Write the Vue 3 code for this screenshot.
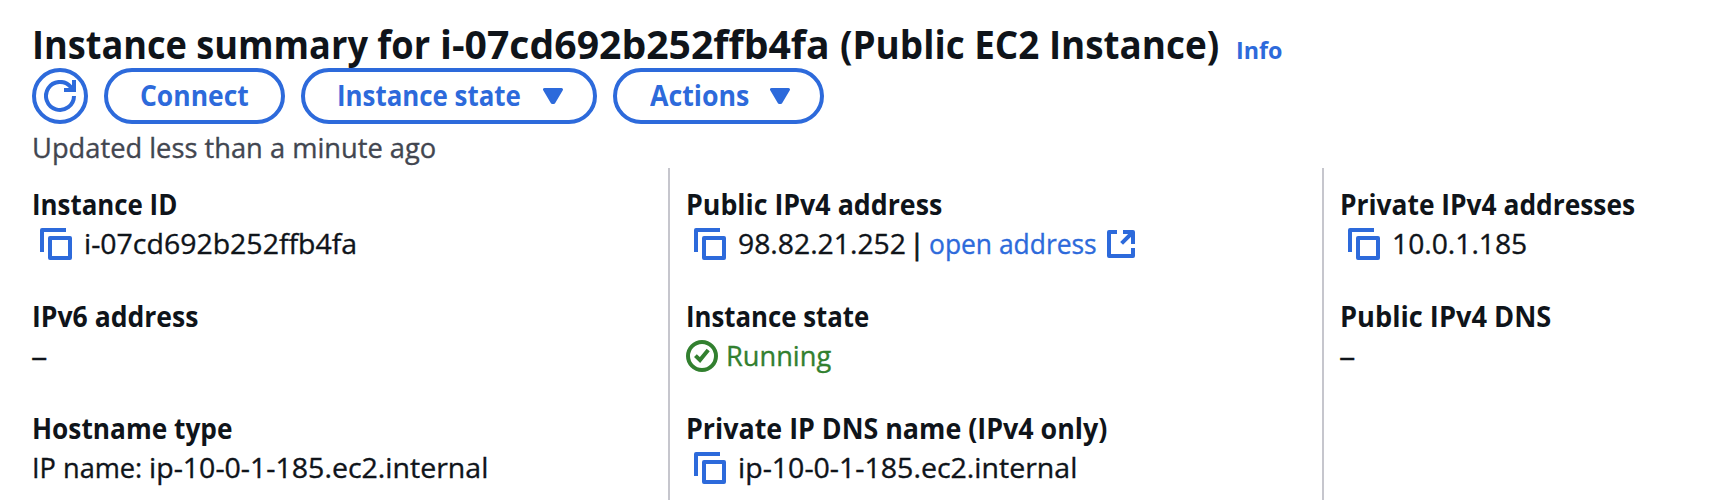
<script setup>
// lw / vw: horizontal width factors of the label and the value
const columns = [
  [
    { label: 'Instance ID', lw: 0.924, value: 'i-07cd692b252ffb4fa', vw: 1.016, copy: true },
    { label: 'IPv6 address', lw: 0.948, value: '–', vw: 1.17, empty: true },
    { label: 'Hostname type', lw: 0.9375, prefix: 'IP name:', value: 'ip-10-0-1-185.ec2.internal', vw: 1.018 }
  ],
  [
    { label: 'Public IPv4 address', lw: 0.9565, value: '98.82.21.252', vw: 1.011, copy: true, link: 'open address' },
    { label: 'Instance state', lw: 0.921, value: 'Running', vw: 0.972, status: true },
    { label: 'Private IP DNS name (IPv4 only)', lw: 0.958, value: 'ip-10-0-1-185.ec2.internal', vw: 1.018, copy: true }
  ],
  [
    { label: 'Private IPv4 addresses', lw: 0.941, value: '10.0.1.185', vw: 1.008, copy: true },
    { label: 'Public IPv4 DNS', lw: 0.972, value: '–', vw: 1.17, empty: true }
  ]
]
const widen = (n) => ({ transform: `scaleX(${n})` })
</script>

<template>
  <main class="panel">
    <header class="header">
      <div class="heading">
        <h1><span class="fit t1">Instance summary for</span> <span class="fit t2">i-07cd692b252ffb4fa</span> <span class="fit t3">(Public EC2 Instance)</span></h1>
        <a class="fit info">Info</a>
      </div>
      <div class="actions">
        <button class="btn round" aria-label="Refresh">
          <svg width="32" height="32" viewBox="0 0 16 16" fill="none" stroke="currentColor" stroke-width="2">
            <path d="M15 8a7 7 0 1 1-1.6-4.5L14.6 5" />
            <path d="M15 0v5H10" />
          </svg>
        </button>
        <button class="btn connect"><span class="fit">Connect</span></button>
        <button class="btn state"><span class="fit">Instance state</span>
          <svg class="caret" width="20" height="16" viewBox="0 0 20 16"><path d="M1.5 1.5h17L10.8 14.5h-1.6z" fill="currentColor" stroke="currentColor" stroke-width="3" stroke-linejoin="round" /></svg>
        </button>
        <button class="btn acts"><span class="fit">Actions</span>
          <svg class="caret" width="20" height="16" viewBox="0 0 20 16"><path d="M1.5 1.5h17L10.8 14.5h-1.6z" fill="currentColor" stroke="currentColor" stroke-width="3" stroke-linejoin="round" /></svg>
        </button>
      </div>
      <p class="updated"><span class="fit">Updated less than a minute ago</span></p>
    </header>
    <section class="grid">
      <div v-for="(col, i) in columns" :key="i" class="col">
        <div v-for="item in col" :key="item.label" class="item">
          <div class="label"><span class="fit" :style="widen(item.lw)">{{ item.label }}</span></div>
          <div class="value" :class="{ success: item.status, empty: item.empty }">
            <svg v-if="item.copy" class="copy" width="32" height="32" viewBox="0 0 16 16" fill="none" stroke="currentColor" stroke-width="2" stroke-linejoin="round">
              <path d="M13 1H1v11" />
              <path d="M5 5h10v10H5z" />
            </svg>
            <svg v-if="item.status" class="ok" width="32" height="32" viewBox="0 0 16 16" fill="none" stroke="currentColor" stroke-width="2">
              <circle cx="8" cy="8" r="7" />
              <path d="M4.7 7.8 7 10l4.1-5" />
            </svg>
            <span v-if="item.prefix" class="fit text prefix">{{ item.prefix }}</span>
            <span class="fit text" :style="widen(item.vw)">{{ item.value }}</span>
            <template v-if="item.link">
              <span class="text bar">|</span>
              <a class="fit text link">{{ item.link }}</a>
              <svg class="ext" width="28" height="28" viewBox="0 0 14 14" fill="none" stroke="currentColor" stroke-width="2" stroke-linejoin="round">
                <path d="M5 1H1v12h12V9" />
                <path d="M8 1h5v6M13 1 7.3 6.7" />
              </svg>
            </template>
          </div>
        </div>
      </div>
    </section>
  </main>
</template>

<style>
body { background: #fff; }
</style>
<style scoped>
.panel {
  width: 1730px;
  height: 500px;
  box-sizing: border-box;
  padding: 20px 0 0 32px;
  overflow: hidden;
  background: #fff;
  color: #0f141a;
  font-family: "Open Sans", "Noto Sans", sans-serif;
  font-size: 28px;
  line-height: 40px;
}
.fit { display: inline-block; transform-origin: 0 50%; white-space: nowrap; }
.heading { display: flex; align-items: baseline; height: 48px; }
h1 { margin: 0; font-size: 40px; line-height: 48px; font-weight: 700; display: flex; }
.t1 { width: 408px; transform: scaleX(0.904); }
.t2 { width: 400px; transform: scaleX(0.979); }
.t3 { width: 396px; transform: scaleX(0.921); }
.info { color: #2d6adb; font-size: 24px; font-weight: 700; transform: scaleX(0.97); }
.actions { display: flex; gap: 16px; height: 56px; }
.btn {
  box-sizing: border-box;
  display: flex;
  align-items: center;
  justify-content: space-between;
  height: 56px;
  padding: 0 30px 0 32px;
  border: 4px solid #2d6adb;
  border-radius: 28px;
  background: #fff;
  color: #2d6adb;
  font: 700 28px/40px "Open Sans", "Noto Sans", sans-serif;
  white-space: nowrap;
}
.btn .fit { margin-top: -2px; }
.round { width: 56px; padding: 0; justify-content: center; border-radius: 50%; }
.round svg, .caret { flex: none; }
.connect { width: 181px; }
.connect .fit { transform: scaleX(0.945); }
.state { width: 296px; }
.state .fit { width: 184px; transform: scaleX(0.924); }
.acts { width: 211px; padding-left: 33px; }
.acts .fit { width: 100px; transform: scaleX(0.955); }
.updated { margin: 3px 0 1px; color: #424650; height: 40px; -webkit-text-stroke: 0.35px currentColor; }
.updated .fit { transform: scaleX(0.974); }
.grid { display: grid; grid-template-columns: 636px 654px 408px; height: 332px; }
.col { box-sizing: border-box; padding-top: 16px; display: flex; flex-direction: column; gap: 32px; white-space: nowrap; }
.col + .col { border-left: 2px solid #c6c6cd; padding-left: 16px; }
.label { font-weight: 700; height: 40px; }
.value { height: 40px; display: flex; align-items: center; -webkit-text-stroke: 0.35px currentColor; }
.text { margin-top: -2px; }
.prefix { width: 117px; transform: scaleX(0.97); }
.copy { margin: 0 12px 0 8px; color: #2d6adb; flex: none; }
.ok { margin-right: 8px; flex: none; }
.success { color: #32802f; }
.empty .text { margin-left: -1px; }
.bar { margin-left: 5px; -webkit-text-stroke-width: 0.8px; }
.link { color: #2d6adb; transform: scaleX(0.943); margin-left: 4px; }
.ext { color: #2d6adb; margin-left: 1px; flex: none; }
</style>
